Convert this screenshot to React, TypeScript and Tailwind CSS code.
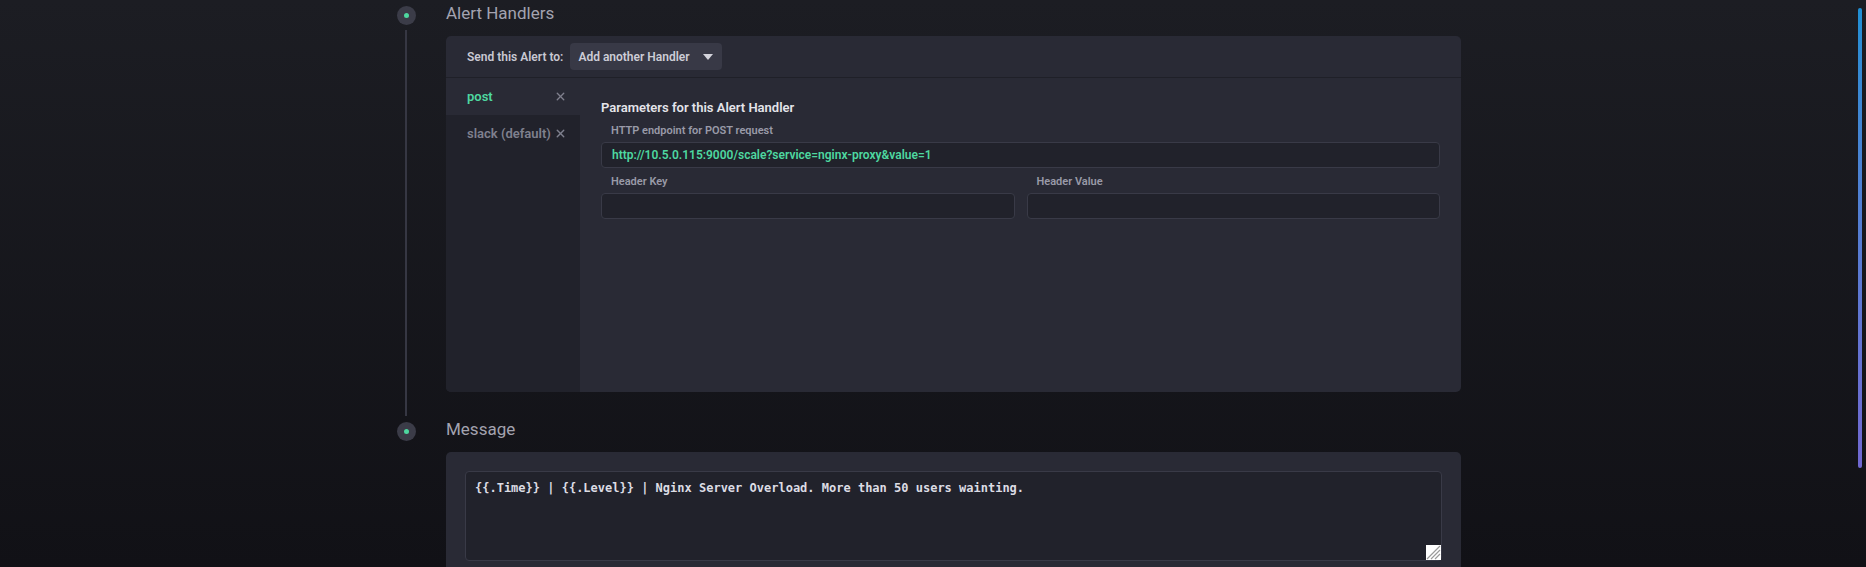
import { X } from "lucide-react";

const font = { fontFamily: "Roboto, 'Liberation Sans', sans-serif" };

function Dot() {
  return (
    <div className="flex h-[30px] items-center justify-center">
      <div className="flex h-[19px] w-[19px] items-center justify-center rounded-full bg-[#3b3c48]">
        <div className="h-[5px] w-[5px] rounded-full bg-[#4ed8a0]" />
      </div>
    </div>
  );
}

function HandlerTab({ name, active }: { name: string; active?: boolean }) {
  return (
    <div
      className={
        active
          ? "flex h-[37px] items-center justify-between bg-[#292a35] pl-[21px] pr-[13px]"
          : "flex h-[37px] items-center justify-between pl-[21px] pr-[13px]"
      }
    >
      <span
        className={
          active
            ? "text-[13px] font-semibold text-[#4ed8a0]"
            : "text-[13px] font-semibold text-[#7f808e]"
        }
      >
        {name}
      </span>
      <X className="h-[13px] w-[13px] text-[#7f808e]" strokeWidth={2.5} />
    </div>
  );
}

function Field({ label, value }: { label: string; value?: string }) {
  return (
    <div className="flex flex-col">
      <label className="mt-[7px] pl-[10px] text-[11px] font-semibold leading-[14px] text-[#999aa8]">
        {label}
      </label>
      <div className="mt-[4px] flex h-[26px] items-center rounded-[4px] border border-[#393a47] bg-[#21222b] pl-[10px] text-[12px] font-semibold text-[#4ed8a0]">
        {value}
      </div>
    </div>
  );
}

export default function App() {
  return (
    <div
      className="relative h-[567px] w-[1866px] overflow-hidden bg-gradient-to-b from-[#1c1d23] to-[#111116]"
      style={font}
    >
      <div className="flex flex-col pl-[396px]">
        {/* Alert Handlers */}
        <div className="flex gap-[30px]">
          <div className="flex w-5 flex-col items-center">
            <Dot />
            <div className="w-[2px] flex-1 bg-[#363743]" />
          </div>
          <div className="flex w-[1015px] flex-col pb-[24px]">
            <div className="flex h-[30px] items-center pb-[2px] text-[17px] font-normal text-[#a3a3b0]">
              Alert Handlers
            </div>
            <div className="mt-[6px] flex h-[356px] flex-col overflow-hidden rounded-[5px] bg-[#292a35]">
              <div className="flex h-[42px] items-center gap-[7px] border-b border-[#1f2028] px-[21px]">
                <span className="text-[12px] font-semibold text-[#c8c8d2]">Send this Alert to:</span>
                <button className="flex h-[27px] w-[152px] items-center justify-between rounded-[4px] bg-[#383946] pl-[8px] pr-[9px] text-[12px] font-semibold text-[#cdcdd6]">
                  <span>Add another Handler</span>
                  <svg width="10" height="6" viewBox="0 0 10 6">
                    <path d="M0 0 L10 0 L5 6 Z" fill="#d4d4dc" />
                  </svg>
                </button>
              </div>
              <div className="flex flex-1">
                <div className="flex w-[134px] flex-col bg-[#21222b]">
                  <HandlerTab name="post" active />
                  <HandlerTab name="slack (default)" />
                </div>
                <div className="flex flex-1 flex-col px-[21px] pt-[21px]">
                  <h4 className="text-[13px] font-semibold leading-[18px] text-[#e4e4ea]">
                    Parameters for this Alert Handler
                  </h4>
                  <Field
                    label="HTTP endpoint for POST request"
                    value="http://10.5.0.115:9000/scale?service=nginx-proxy&value=1"
                  />
                  <div className="grid grid-cols-2 gap-[12px]">
                    <Field label="Header Key" />
                    <Field label="Header Value" />
                  </div>
                </div>
              </div>
            </div>
          </div>
        </div>

        {/* Message */}
        <div className="flex gap-[30px]">
          <div className="flex w-5 flex-col items-center">
            <Dot />
          </div>
          <div className="flex w-[1015px] flex-col">
            <div className="flex h-[30px] items-center pb-[2px] text-[17px] font-normal text-[#a3a3b0]">
              Message
            </div>
            <div className="mt-[6px] rounded-[5px] bg-[#292a35] px-[19px] pt-[19px] pb-[20px]">
              <div className="relative h-[90px] rounded-[4px] border border-[#393a47] bg-[#21222b] px-[9px] pt-[8px]">
                <p
                  className="text-[12px] font-semibold leading-[16px] text-[#dcdce4]"
                  style={{ fontFamily: "'DejaVu Sans Mono', 'Liberation Mono', monospace" }}
                >
                  {"{{.Time}} | {{.Level}} | Nginx Server Overload. More than 50 users wainting."}
                </p>
                <svg className="absolute bottom-0 right-0" width="15" height="15" viewBox="0 0 15 15">
                  <rect width="15" height="15" fill="#ffffff" />
                  <path d="M14 5 L5 14 M14 9 L9 14 M14 1 L1 14" stroke="#9a9a9a" strokeWidth="1.2" />
                </svg>
              </div>
            </div>
          </div>
        </div>
      </div>

      <div className="absolute right-[4px] top-[8px] h-[460px] w-[4px] rounded-full bg-gradient-to-b from-[#1e8fd4] to-[#7068d0]" />
    </div>
  );
}
